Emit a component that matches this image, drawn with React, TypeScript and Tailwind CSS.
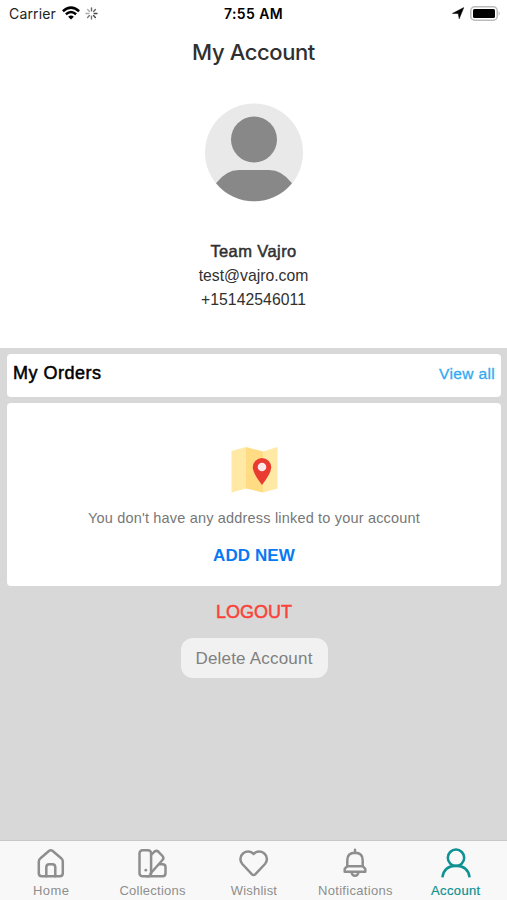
import type { ReactNode } from 'react';
import { clsx } from 'clsx';

interface TabItem {
  label: string;
  icon: ReactNode;
  labelClass: string;
  active?: boolean;
}

const TABS: TabItem[] = [
  {
    label: 'Home',
    labelClass: 'tracking-[0.4px]',
    icon: (
      <>
        <path d="M5.5 11.2Q3.8 12.5 3.8 14.5V26.2Q3.8 29.2 6.8 29.2H24.8Q27.8 29.2 27.8 26.2V14.5Q27.8 12.5 26.2 11.2L17.4 3.8Q15.8 2.6 14.2 3.8Z" />
        <path d="M11.3 29.2V20.2Q11.3 17.2 14.3 17.2H17.3Q20.3 17.2 20.3 20.2V29.2" />
      </>
    ),
  },
  {
    label: 'Collections',
    labelClass: 'tracking-[0.25px]',
    icon: (
      <>
        <rect x="2.5" y="3.2" width="11.6" height="26" rx="3" />
        <path d="M14.1 7.8L17.5 4.6Q19.5 3 21.5 4.8L25.5 9Q27.3 11 25.5 13L13.5 26.5" />
        <path d="M9.5 29.2H25.5Q28.5 29.2 28.5 26.2V20Q28.5 17.2 25.5 17.2H22" />
        <circle cx="8.8" cy="23.2" r="1.4" fill="currentColor" stroke="none" />
      </>
    ),
  },
  {
    label: 'Wishlist',
    labelClass: 'tracking-[0.2px]',
    icon: (
      <path d="M15.6 7C12.6 3.5 8 4 5.2 6.2C1.8 9 1.6 14 4.3 17L14 27.3Q15.6 28.9 17.2 27.3L27 17C29.7 14 29.5 9 26.1 6.2C23.2 4 18.6 3.5 15.6 7Z" />
    ),
  },
  {
    label: 'Notifications',
    labelClass: 'tracking-[0.3px]',
    icon: (
      <>
        <path d="M16 2.8V6M8.3 19V13.2Q8.3 5.8 16 5.8Q23.7 5.8 23.7 13.2V19" />
        <path d="M8.3 19.2H23.7L26.3 21.8V24.7H5.7V21.8Z" />
        <path d="M12.5 25.2Q13 28.8 16 28.8Q19 28.8 19.5 25.2" />
      </>
    ),
  },
  {
    label: 'Account',
    labelClass: 'tracking-[0.35px] [-webkit-text-stroke:0.2px_#0d9191] -translate-x-px',
    active: true,
    icon: (
      <>
        <circle cx="15" cy="10.8" r="8.2" />
        <path d="M1.4 30.4Q3 18.8 15 18.8Q27 18.8 28.6 30.4" strokeLinecap="butt" />
      </>
    ),
  },
];

function StatusBar() {
  return (
    <header className="grid h-7 grid-cols-3 items-center pl-[9px] pr-[6px] font-['Inter',sans-serif] text-black">
      <div className="flex items-center">
        <span className="text-[14px] leading-7 tracking-[0.15px] text-[#222]">Carrier</span>
        <svg className="ml-[6px] h-[14px] w-[18px] -translate-y-px" viewBox="0 0 18 14" fill="none" stroke="#000" strokeWidth="2.5">
          <path d="M.9 5.2Q9-2 17.1 5.2M3.9 8.3Q9 3.7 14.1 8.3" />
          <path d="M6.1 10.7Q9 8.1 11.9 10.7L9 13.6Z" fill="#000" stroke="none" />
        </svg>
        <svg className="ml-[5px] size-[13px] -translate-y-px" viewBox="0 0 13 13" strokeWidth="1.4" strokeLinecap="round">
          <path d="M6.5 1V3.8M10.4 2.6L8.5 4.5" stroke="#666" />
          <path d="M12 6.5H9.2M10.4 10.4L8.5 8.5" stroke="#444" />
          <path d="M6.5 12V9.2M2.6 10.4L4.5 8.5" stroke="#777" />
          <path d="M1 6.5H3.8M2.6 2.6L4.5 4.5" stroke="#aaa" />
        </svg>
      </div>
      <span className="text-center text-[14px] leading-7 font-semibold tracking-[0.4px]">
        <span className="-ml-[3px]">7:55 AM</span>
      </span>
      <div className="flex -translate-y-px items-center justify-end gap-[6px]">
        <svg className="size-[12px]" viewBox="0 0 12 12">
          <path d="M11.8.6L7.2 11.8L6.2 6.6L.4 6.4Z" stroke="#000" strokeWidth=".5" />
        </svg>
        <svg className="h-[15px] w-[31px]" viewBox="0 0 31 15">
          <rect x=".8" y=".8" width="26.4" height="13.4" rx="3.8" fill="#fff" stroke="#bbb" strokeWidth="1.5" />
          <rect x="3" y="3" width="22" height="9" rx="1.5" />
          <path d="M28.6 5Q31 7.5 28.6 10Z" fill="#bbb" />
        </svg>
      </div>
    </header>
  );
}

function Profile() {
  return (
    <section className="flex h-[320px] flex-col items-center text-[#303030]">
      <h1 className="mt-[8px] font-['Inter',sans-serif] text-[22px] leading-8 font-medium tracking-[-0.4px]">My Account</h1>
      <svg className="mt-[35px] h-[99px] w-[98px]" viewBox="0 0 98 99">
        <circle cx="49" cy="49.5" r="49" fill="#e9e9e9" />
        <circle cx="49" cy="36.5" r="23" fill="#888" />
        <path d="M11 80.3Q21 67 34 67H64Q77 67 87 80.3C67 104.3 31 104.3 11 80.3Z" fill="#888" />
      </svg>
      <p className="mt-[37px] text-[16.5px] leading-6 tracking-[0.4px] [-webkit-text-stroke:0.5px_#303030]">Team Vajro</p>
      <p className="pt-px text-[15.75px] leading-6">test@vajro.com</p>
      <p className="text-[15.75px] leading-6 tracking-[0.05px]">+15142546011</p>
    </section>
  );
}

function MapIcon() {
  return (
    <svg className="h-[46px] w-[47px]" viewBox="0 0 47 46">
      <path d="M.5 4L15 0V41.5L.5 45.5Z" fill="#ffe9a5" />
      <path d="M15 0L32 4.5V45.5L15 41.5Z" fill="#ffdc83" />
      <path d="M32 4.5L46.5 0V41.5L32 45.5Z" fill="#ffe9a5" />
      <path d="M31 38Q21.8 26 21.8 20.2A9.2 9.2 0 0 1 40.2 20.2Q40.2 26 31 38Z" fill="#ea3b31" />
      <circle cx="31" cy="20" r="4.3" fill="#fde9ec" />
    </svg>
  );
}

function TabBar() {
  return (
    <nav className="grid h-[60px] grid-cols-5 border-t border-[#c8c8c8] bg-[#f8f8f8]">
      {TABS.map((tab) => (
        <div
          key={tab.label}
          className={clsx('flex flex-col items-center pt-[6px] pl-px', tab.active ? 'text-[#0d9191]' : 'text-[#8e8e8e]')}
        >
          <svg
            className="size-8 shrink-0"
            viewBox="0 0 32 32"
            fill="none"
            stroke="currentColor"
            strokeWidth="2.5"
            strokeLinejoin="round"
            strokeLinecap="round"
          >
            {tab.icon}
          </svg>
          <span className={clsx('mt-[4px] text-[13px] leading-4 whitespace-nowrap', tab.labelClass)}>
            {tab.label}
          </span>
        </div>
      ))}
    </nav>
  );
}

export default function App() {
  return (
    <div className="flex h-[900px] w-[507px] flex-col overflow-hidden bg-white font-['Liberation_Sans',sans-serif]">
      <StatusBar />
      <Profile />
      <main className="flex flex-1 flex-col items-center bg-[#d8d8d8] pt-[6px] pr-[6px] pl-[7px]">
        <section className="flex h-[43px] w-full items-center justify-between rounded bg-white px-[6px] pb-[4px]">
          <h2 className="text-[18px] tracking-[0.5px] text-black [-webkit-text-stroke:0.5px_#000]">My Orders</h2>
          <a className="text-[15.5px] tracking-[0.35px] text-[#31aaf0] [-webkit-text-stroke:0.3px_#31aaf0]">View all</a>
        </section>
        <section className="mt-[6px] flex h-[183px] w-full flex-col items-center rounded bg-white pt-[44px]">
          <MapIcon />
          <p className="mt-[13px] text-[14.5px] leading-6 tracking-[0.18px] text-[#777]">
            You don't have any address linked to your account
          </p>
          <button className="mt-[14px] text-[17px] leading-6 font-bold tracking-[0.1px] text-[#0879f2]">ADD NEW</button>
        </section>
        <button className="mt-[14px] text-[18px] leading-6 text-[#fa4238] [-webkit-text-stroke:0.5px_#fa4238]">LOGOUT</button>
        <button className="mt-[14px] h-10 w-[147px] rounded-xl bg-[#f1f1f1] pt-px text-[17px] tracking-[0.2px] text-[#808080]">
          Delete Account
        </button>
      </main>
      <TabBar />
    </div>
  );
}
